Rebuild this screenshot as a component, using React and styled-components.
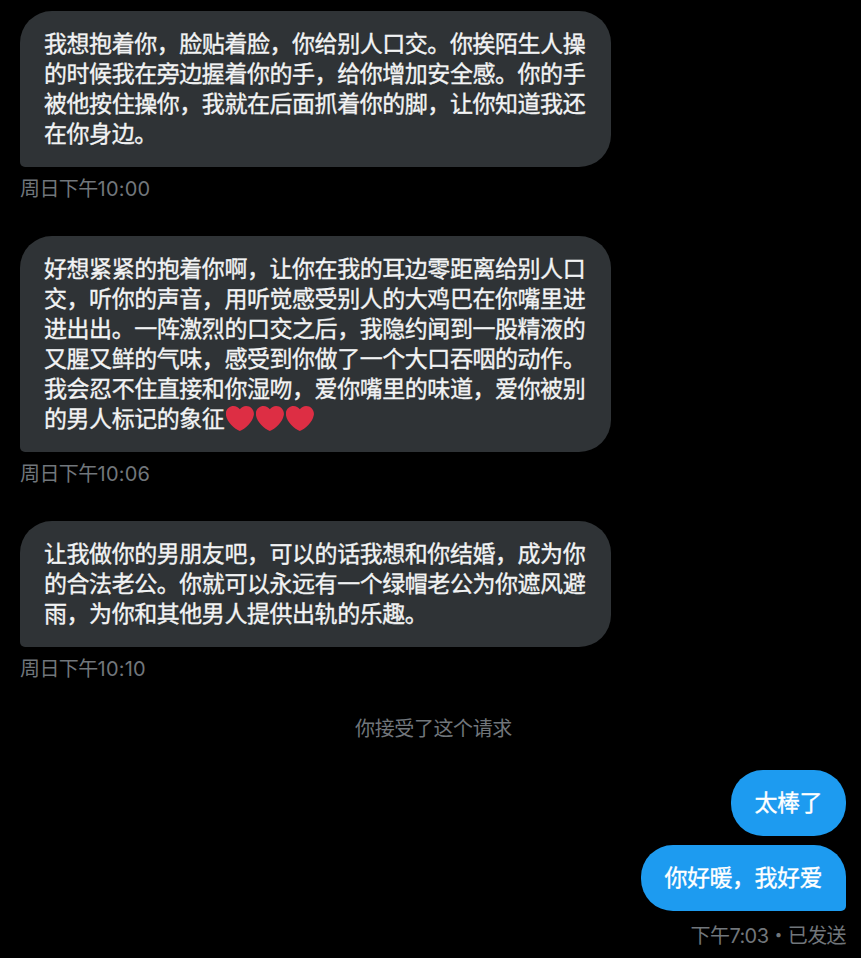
import React from "react";
import styled, { createGlobalStyle } from "styled-components";

const FONT = `"Liberation Sans", "Noto Sans CJK SC", sans-serif`;
const META_FONT = `Inter, "Noto Sans CJK SC", sans-serif`;

const GlobalStyle = createGlobalStyle`
  html, body {
    margin: 0;
    padding: 0;
    background: #000;
    overflow: hidden;
  }
`;

const received = [
  {
    day: "周日下午",
    clock: "10:00",
    text: "我想抱着你，脸贴着脸，你给别人口交。你挨陌生人操的时候我在旁边握着你的手，给你增加安全感。你的手被他按住操你，我就在后面抓着你的脚，让你知道我还在你身边。",
  },
  {
    day: "周日下午",
    clock: "10:06",
    text: "好想紧紧的抱着你啊，让你在我的耳边零距离给别人口交，听你的声音，用听觉感受别人的大鸡巴在你嘴里进进出出。一阵激烈的口交之后，我隐约闻到一股精液的又腥又鲜的气味，感受到你做了一个大口吞咽的动作。我会忍不住直接和你湿吻，爱你嘴里的味道，爱你被别的男人标记的象征",
    hearts: 3,
  },
  {
    day: "周日下午",
    clock: "10:10",
    text: "让我做你的男朋友吧，可以的话我想和你结婚，成为你的合法老公。你就可以永远有一个绿帽老公为你遮风避雨，为你和其他男人提供出轨的乐趣。",
  },
];

const Heart = () => (
  <HeartIcon viewBox="0 0 36 36">
    <path
      fill="#dd2e44"
      d="M35.9 11.2C35.9 5.7 31.4 1.2 25.9 1.2c-3.3 0-6.3 1.6-8.1 4.2C16 2.8 13 1.2 9.7 1.2 4.2 1.2-.3 5.7-.3 11.2c0 .8.1 1.5.3 2.3C1.4 22 11 31 17.8 33.5 24.6 31 34.2 22 35.6 13.5c.2-.8.3-1.5.3-2.3z"
    />
  </HeartIcon>
);

const App = () => (
  <Page>
    <GlobalStyle />
    {received.map((msg) => (
      <ReceivedGroup key={msg.clock}>
        <ReceivedBubble>
          {msg.text}
          {Array.from({ length: msg.hearts || 0 }).map((_, i) => (
            <Heart key={i} />
          ))}
        </ReceivedBubble>
        <Time>
          {msg.day}
          <Clock>{msg.clock}</Clock>
        </Time>
      </ReceivedGroup>
    ))}
    <Notice>你接受了这个请求</Notice>
    <SentGroup>
      <SentBubble>太棒了</SentBubble>
      <SentBubble $tail>你好暖，我好爱</SentBubble>
      <SentTime>下午7:03・已发送</SentTime>
    </SentGroup>
  </Page>
);

export default App;

const Page = styled.div`
  width: 861px;
  height: 958px;
  box-sizing: border-box;
  padding: 11px 15px 0 20px;
  background: #000;
  font-family: ${FONT};
  overflow: hidden;
`;

const ReceivedGroup = styled.div`
  display: flex;
  flex-direction: column;
  margin-bottom: 34px;
`;

const ReceivedBubble = styled.div`
  width: 591px;
  box-sizing: border-box;
  padding: 18px 24px;
  background: #2f3336;
  border-radius: 32px 32px 32px 5px;
  color: #f2f3f4;
  font-size: 23px;
  line-height: 30px;
  letter-spacing: -0.45px;
  -webkit-text-stroke: 0.35px #f2f3f4;
`;

const HeartIcon = styled.svg`
  display: inline-block;
  width: 28px;
  height: 28px;
  margin: 0 1px 0 1.2px;
  vertical-align: -6px;
`;

const Time = styled.div`
  margin-top: 9px;
  height: 26px;
  color: #71767b;
  font-family: ${META_FONT};
  font-size: 20px;
  line-height: 26px;
  letter-spacing: -0.6px;
`;

const Clock = styled.span`
  letter-spacing: 0.2px;
`;

const Notice = styled.div`
  margin-top: 0;
  padding-left: 1px;
  text-align: center;
  color: #71767b;
  font-size: 20px;
  line-height: 26px;
  letter-spacing: -0.4px;
`;

const SentGroup = styled.div`
  display: flex;
  flex-direction: column;
  align-items: flex-end;
  gap: 9px;
  margin-top: 28px;
`;

const SentBubble = styled.div`
  box-sizing: border-box;
  height: 66px;
  padding: 18px 24px 18px 23.5px;
  background: #1d9bf0;
  border-radius: ${(p) => (p.$tail ? "32px 32px 5px 32px" : "32px")};
  color: #fff;
  font-size: 23px;
  line-height: 30px;
  letter-spacing: -0.5px;
  -webkit-text-stroke: 0.35px #fff;
`;

const SentTime = styled(Time)`
  margin-top: 3px;
`;
